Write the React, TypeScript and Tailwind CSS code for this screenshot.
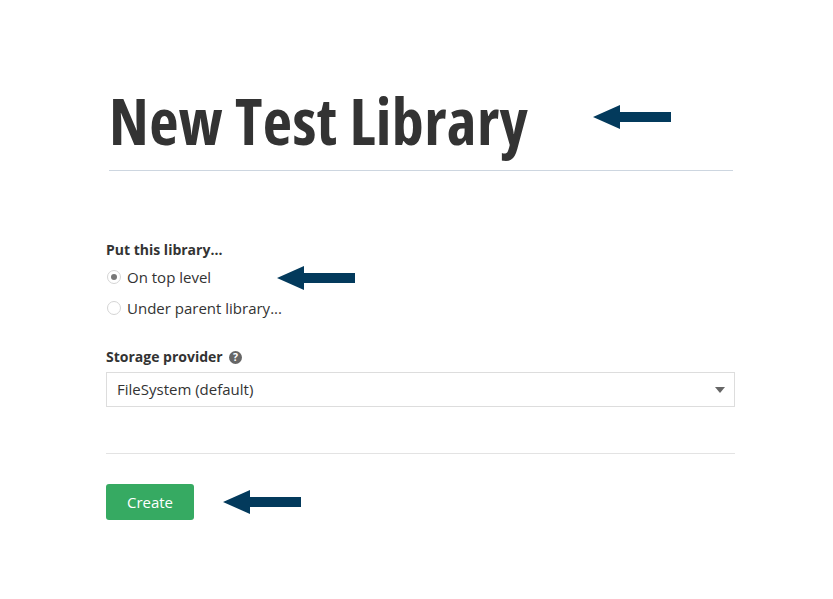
import React from "react";

function Arrow({ className = "" }: { className?: string }) {
  return (
    <svg width="78" height="24" viewBox="0 0 78 24" className={className}>
      <polygon points="0,12 27,0 27,7 78,7 78,17 27,17 27,24" fill="#033a5c" />
    </svg>
  );
}

export default function App() {
  return (
    <div className="min-h-[599px] w-[833px] bg-white text-[#333] [font-family:'Open_Sans',sans-serif]">
      <div className="ml-[106px] w-[629px] pt-[74px]">
        <div className="ml-[3px] w-[624px] border-b border-[#cdd6e0]">
          <div className="flex items-center h-[96px]">
            <h1 className="text-[64px] leading-none font-bold font-stretch-condensed tracking-[0.4px] -mt-[2px] text-[#333]">
              New Test Library
            </h1>
            <Arrow className="ml-[65px] -mt-[11px]" />
          </div>
        </div>

        <div className="mt-[69px]">
          <div className="text-[14px] font-bold leading-[20px]">Put this library...</div>
          <div className="flex items-center h-[22px] mt-[6px]">
            <span className="w-[14px] h-[14px] rounded-full border border-[#d5d5d5] flex items-center justify-center ml-[1px]">
              <span className="w-[6px] h-[6px] rounded-full bg-[#777]" />
            </span>
            <span className="ml-[6px] text-[15px]">On top level</span>
            <Arrow className="ml-[66px] mt-[2px]" />
          </div>
          <div className="flex items-center h-[22px] mt-[9px]">
            <span className="w-[14px] h-[14px] rounded-full border border-[#d5d5d5] ml-[1px]" />
            <span className="ml-[6px] text-[15px]">Under parent library...</span>
          </div>
        </div>

        <div className="mt-[28px]">
          <div className="flex items-center text-[14px] font-bold leading-[20px]">
            Storage provider
            <svg width="13" height="13" viewBox="0 0 13 13" className="ml-[6px]">
              <circle cx="6.5" cy="6.5" r="6.5" fill="#666" />
              <text x="6.5" y="10.3" textAnchor="middle" fontSize="10.5" fontWeight="bold" fill="#fff" fontFamily="Open Sans, sans-serif">?</text>
            </svg>
          </div>
          <div className="mt-[5px] h-[35px] border border-[#ddd] flex items-center justify-between pl-[10px] pr-[9px]">
            <span className="text-[15px]">FileSystem (default)</span>
            <svg width="10" height="6" viewBox="0 0 10 6">
              <polygon points="0,0 10,0 5,6" fill="#666" />
            </svg>
          </div>
        </div>

        <div className="mt-[46px] border-t border-[#e3e3e3]" />

        <div className="mt-[30px] flex items-center">
          <button className="w-[88px] h-[36px] rounded-[3px] bg-[#36aa62] text-white text-[15px]">
            Create
          </button>
          <Arrow className="ml-[29px]" />
        </div>
      </div>
    </div>
  );
}
